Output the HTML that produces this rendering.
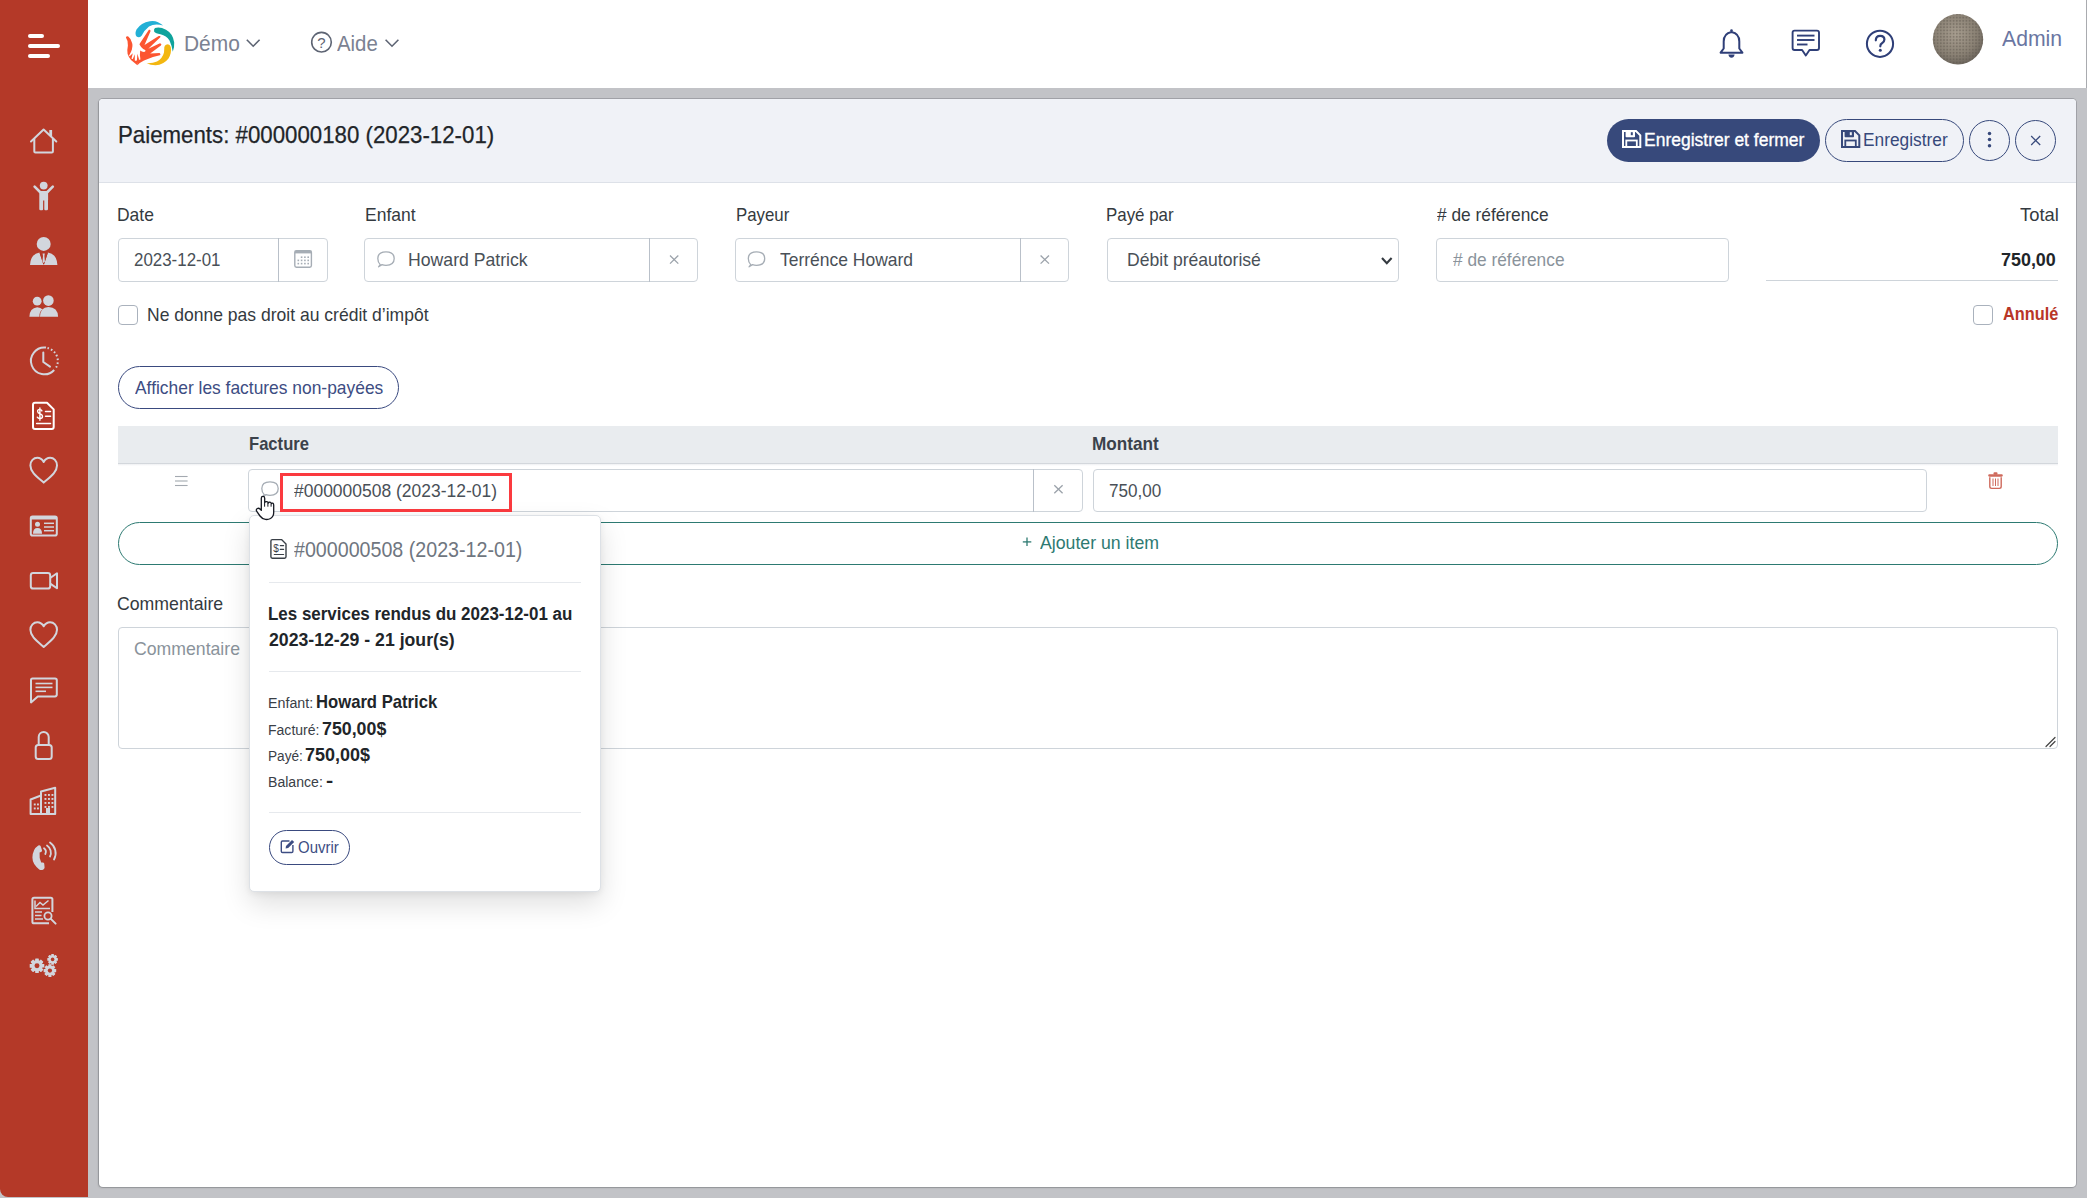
<!DOCTYPE html>
<html><head><meta charset="utf-8">
<style>
*{box-sizing:border-box;margin:0;padding:0}
html,body{width:2087px;height:1198px;overflow:hidden}
body{background:#c2c3c7;font-family:"Liberation Sans",sans-serif;position:relative}
.a{position:absolute}
.t{position:absolute;white-space:nowrap;line-height:1}
svg.a{overflow:visible}
</style></head>
<body>
<div class="a" style="left:0px;top:0px;width:88px;height:1197px;background:#b43928;border-bottom-left-radius:8px"></div>
<div class="a" style="left:88px;top:0px;width:1998px;height:88px;background:#fff"></div>
<div class="a" style="left:2086px;top:0px;width:1px;height:88px;background:#a9abaf"></div>
<div class="a" style="left:28px;top:34px;width:16px;height:4px;background:#fff;border-radius:2px"></div>
<div class="a" style="left:28px;top:44px;width:32px;height:4px;background:#fff;border-radius:2px"></div>
<div class="a" style="left:28px;top:54px;width:22px;height:4px;background:#fff;border-radius:2px"></div>
<svg class="a" style="left:0;top:0" width="2087" height="1198" viewBox="0 0 2087 1198"><g fill="none" stroke="#d2d6dd" stroke-width="2" stroke-linecap="round" stroke-linejoin="round"><polyline points="31,141.5 43.6,129.5 56.3,141.5"/><path d="M34.3,139 V151.5 Q34.3,152.6 35.4,152.6 H51.8 Q52.9,152.6 52.9,151.5 V139"/></g><rect x="49.3" y="130" width="2.8" height="6" fill="#d2d6dd"/><circle cx="43.7" cy="185.6" r="3.9" fill="#d2d6dd"/><path d="M39.3,191 H48.1 V200 H48 V209 Q48,210.2 46.8,210.2 H45.2 Q44.3,210.2 44.3,209 V200.5 H43.1 V209 Q43.1,210.2 42.1,210.2 H40.5 Q39.3,210.2 39.3,209 Z" fill="#d2d6dd"/><g stroke="#d2d6dd" stroke-width="2.6" stroke-linecap="round"><line x1="40" y1="192" x2="34.6" y2="186.6"/><line x1="47.4" y1="192" x2="52.8" y2="186.6"/></g><circle cx="43.7" cy="243.9" r="7" fill="#d2d6dd"/><path d="M30,265 Q30.5,254 39.5,252.6 L43.7,264.5 L47.9,252.6 Q57,254 57.4,265 Z" fill="#d2d6dd"/><path d="M40,252.8 L43.7,264.2 L47.4,252.8" fill="none" stroke="#b43928" stroke-width="1"/><path d="M42.6,253.6 H44.8 L44.4,256 L44.9,261.5 L43.7,263 L42.5,261.5 L43,256 Z" fill="#d2d6dd"/><circle cx="37.2" cy="301.2" r="4.4" fill="#d2d6dd"/><circle cx="48.4" cy="300.6" r="5.3" fill="#d2d6dd"/><path d="M29.4,316.7 Q29.6,308 37.2,307.2 Q41,307.3 42.5,309.6 Q39,312 39.5,316.7 Z" fill="#d2d6dd"/><path d="M40,316.7 Q40.3,307.3 48.4,307 Q57.8,307.3 58.1,316.7 Z" fill="#d2d6dd"/><path d="M46,347.6 A13.4,13.4 0 1 0 54.2,370" fill="none" stroke="#d2d6dd" stroke-width="2"/><path d="M47.5,348 A13.4,13.4 0 0 1 55.2,369" fill="none" stroke="#d2d6dd" stroke-width="2" stroke-dasharray="1.6 2.2"/><polyline points="43.3,352.5 43.3,362 50,366.6" fill="none" stroke="#d2d6dd" stroke-width="2" stroke-linecap="round" stroke-linejoin="round"/><path d="M35,402.8 H47 L53.7,409.4 V427 Q53.7,429 51.7,429 H35 Q33,429 33,427 V404.8 Q33,402.8 35,402.8 Z" fill="none" stroke="#ffffff" stroke-width="2" stroke-linejoin="round"/><g stroke="#ffffff" stroke-width="1.5" stroke-linecap="round"><line x1="45.5" y1="411.4" x2="50.5" y2="411.4"/><line x1="45.5" y1="416.2" x2="50.5" y2="416.2"/><line x1="36.6" y1="423.6" x2="50.5" y2="423.6"/></g><path d="M41.9,410.9 Q41.2,409.4 39.7,409.4 Q37.6,409.4 37.6,411.3 Q37.6,413 40,413.8 Q42.5,414.6 42.5,416.6 Q42.5,418.6 39.9,418.6 Q38.1,418.6 37.3,417.2 M39.9,407.9 V420.2" fill="none" stroke="#ffffff" stroke-width="1.4" stroke-linecap="round"/><path d="M43.7,482.59999999999997 C36.5,476.4 30.4,471.9 30.4,465.4 C30.4,460.9 33.6,457.79999999999995 37.3,457.79999999999995 C40.2,457.79999999999995 42.4,459.59999999999997 43.7,461.9 C45,459.59999999999997 47.2,457.79999999999995 50.1,457.79999999999995 C53.8,457.79999999999995 57,460.9 57,465.4 C57,471.9 50.9,476.4 43.7,482.59999999999997 Z" fill="none" stroke="#d2d6dd" stroke-width="2" stroke-linejoin="round"/><rect x="30.8" y="516.5" width="26" height="19" rx="1.8" fill="none" stroke="#d2d6dd" stroke-width="2"/><rect x="30.8" y="516.5" width="26" height="3" fill="#d2d6dd"/><circle cx="37.5" cy="524.3" r="2.5" fill="#d2d6dd"/><path d="M33,533.8 Q33,528 37.5,528 Q42,528 42,533.8 Z" fill="#d2d6dd"/><g stroke="#d2d6dd" stroke-width="1.5"><line x1="44" y1="523.3" x2="54" y2="523.3"/><line x1="44" y1="527" x2="54" y2="527"/><line x1="44" y1="530.7" x2="54" y2="530.7"/></g><rect x="30.8" y="573" width="19.4" height="15.6" rx="2.4" fill="none" stroke="#d2d6dd" stroke-width="2"/><path d="M50.2,578 L57,573.3 V588.3 L50.2,583.6" fill="none" stroke="#d2d6dd" stroke-width="2" stroke-linejoin="round"/><path d="M43.7,647.0 C36.5,640.8 30.4,636.3 30.4,629.8 C30.4,625.3 33.6,622.1999999999999 37.3,622.1999999999999 C40.2,622.1999999999999 42.4,624.0 43.7,626.3 C45,624.0 47.2,622.1999999999999 50.1,622.1999999999999 C53.8,622.1999999999999 57,625.3 57,629.8 C57,636.3 50.9,640.8 43.7,647.0 Z" fill="none" stroke="#d2d6dd" stroke-width="2" stroke-linejoin="round"/><path d="M32.5,678.5 H55 Q56.8,678.5 56.8,680.3 V694.6 Q56.8,696.4 55,696.4 H37.8 L31,702.4 V680 Q31,678.5 32.5,678.5 Z" fill="none" stroke="#d2d6dd" stroke-width="2" stroke-linejoin="round"/><g stroke="#d2d6dd" stroke-width="1.6"><line x1="35.5" y1="683.5" x2="52.5" y2="683.5"/><line x1="35.5" y1="687.4" x2="52.5" y2="687.4"/><line x1="35.5" y1="691.3" x2="46" y2="691.3"/></g><path d="M38.7,745 V737 A5,5 0 0 1 48.7,737 V745" fill="none" stroke="#d2d6dd" stroke-width="2"/><rect x="35.7" y="745" width="16" height="14" rx="2.5" fill="none" stroke="#d2d6dd" stroke-width="2"/><path d="M30.6,814 V799.5 L41,795.5 V791.5 L55.2,787.8 V814 Z M30.6,814 H55.2" fill="none" stroke="#d2d6dd" stroke-width="2" stroke-linejoin="round"/><path d="M41,795.5 V814" stroke="#d2d6dd" stroke-width="2"/><rect x="46" y="808" width="4" height="6" fill="#d2d6dd"/><g fill="#d2d6dd"><rect x="44.5" y="794" width="1.9" height="1.9"/><rect x="48" y="794" width="1.9" height="1.9"/><rect x="51.5" y="794" width="1.9" height="1.9"/><rect x="44.5" y="798" width="1.9" height="1.9"/><rect x="48" y="798" width="1.9" height="1.9"/><rect x="51.5" y="798" width="1.9" height="1.9"/><rect x="44.5" y="802" width="1.9" height="1.9"/><rect x="48" y="802" width="1.9" height="1.9"/><rect x="51.5" y="802" width="1.9" height="1.9"/><rect x="44.5" y="806" width="1.9" height="1.9"/><rect x="48" y="806" width="1.9" height="1.9"/><rect x="51.5" y="806" width="1.9" height="1.9"/><rect x="33.8" y="803.5" width="1.9" height="1.9"/><rect x="37" y="803.5" width="1.9" height="1.9"/><rect x="33.8" y="807.5" width="1.9" height="1.9"/><rect x="37" y="807.5" width="1.9" height="1.9"/></g><path d="M38.3,845.4 Q39.8,844.8 40.6,846 L42,850.2 Q42.3,851.5 41.1,852 L39.6,852.6 Q39,857.6 41.2,862.6 L42.7,862.4 Q43.9,862.4 44.2,863.6 L44.6,867.6 Q44.6,868.9 43.4,869.4 Q41.2,870.4 39.2,869.4 Q32.4,864.2 32.4,857.6 Q32.6,849 38.3,845.4 Z" fill="#d2d6dd"/><path d="M44,848.3 A4.6,4.6 0 0 1 45.3,854" fill="none" stroke="#d2d6dd" stroke-width="1.8" stroke-linecap="round"/><path d="M47,845.5 A8.6,8.6 0 0 1 50,856.5" fill="none" stroke="#d2d6dd" stroke-width="1.8" stroke-linecap="round"/><path d="M50,842.5 A13,13 0 0 1 54,859.5" fill="none" stroke="#d2d6dd" stroke-width="1.8" stroke-linecap="round"/><path d="M49,923.3 H34 Q32.4,923.3 32.4,921.7 V899.3 Q32.4,897.7 34,897.7 H50.8 Q52.4,897.7 52.4,899.3 V912" fill="none" stroke="#d2d6dd" stroke-width="2"/><g stroke="#d2d6dd" stroke-width="1.5" fill="none"><polyline points="35,900.5 35,908.5 50,908.5"/><polyline points="36,906.5 40,902.5 43,905 48.5,900.5"/><line x1="35" y1="912" x2="42" y2="912"/><line x1="35" y1="915.5" x2="41.5" y2="915.5"/><line x1="35" y1="919" x2="43" y2="919"/></g><circle cx="48" cy="916" r="3.6" fill="none" stroke="#d2d6dd" stroke-width="1.8"/><line x1="50.6" y1="918.6" x2="55.6" y2="923.6" stroke="#d2d6dd" stroke-width="2" stroke-linecap="round"/><circle cx="37.0" cy="965.8" r="5.69" fill="#d2d6dd"/><rect x="35.17" y="958.50" width="3.65" height="7.30" rx="0.5" fill="#d2d6dd" transform="rotate(0.0 37.0 965.8)"/><rect x="35.17" y="958.50" width="3.65" height="7.30" rx="0.5" fill="#d2d6dd" transform="rotate(45.0 37.0 965.8)"/><rect x="35.17" y="958.50" width="3.65" height="7.30" rx="0.5" fill="#d2d6dd" transform="rotate(90.0 37.0 965.8)"/><rect x="35.17" y="958.50" width="3.65" height="7.30" rx="0.5" fill="#d2d6dd" transform="rotate(135.0 37.0 965.8)"/><rect x="35.17" y="958.50" width="3.65" height="7.30" rx="0.5" fill="#d2d6dd" transform="rotate(180.0 37.0 965.8)"/><rect x="35.17" y="958.50" width="3.65" height="7.30" rx="0.5" fill="#d2d6dd" transform="rotate(225.0 37.0 965.8)"/><rect x="35.17" y="958.50" width="3.65" height="7.30" rx="0.5" fill="#d2d6dd" transform="rotate(270.0 37.0 965.8)"/><rect x="35.17" y="958.50" width="3.65" height="7.30" rx="0.5" fill="#d2d6dd" transform="rotate(315.0 37.0 965.8)"/><circle cx="37.0" cy="965.8" r="2.48" fill="#b43928"/><circle cx="52.6" cy="959.4" r="4.13" fill="#d2d6dd"/><rect x="51.27" y="954.10" width="2.65" height="5.30" rx="0.5" fill="#d2d6dd" transform="rotate(0.0 52.6 959.4)"/><rect x="51.27" y="954.10" width="2.65" height="5.30" rx="0.5" fill="#d2d6dd" transform="rotate(45.0 52.6 959.4)"/><rect x="51.27" y="954.10" width="2.65" height="5.30" rx="0.5" fill="#d2d6dd" transform="rotate(90.0 52.6 959.4)"/><rect x="51.27" y="954.10" width="2.65" height="5.30" rx="0.5" fill="#d2d6dd" transform="rotate(135.0 52.6 959.4)"/><rect x="51.27" y="954.10" width="2.65" height="5.30" rx="0.5" fill="#d2d6dd" transform="rotate(180.0 52.6 959.4)"/><rect x="51.27" y="954.10" width="2.65" height="5.30" rx="0.5" fill="#d2d6dd" transform="rotate(225.0 52.6 959.4)"/><rect x="51.27" y="954.10" width="2.65" height="5.30" rx="0.5" fill="#d2d6dd" transform="rotate(270.0 52.6 959.4)"/><rect x="51.27" y="954.10" width="2.65" height="5.30" rx="0.5" fill="#d2d6dd" transform="rotate(315.0 52.6 959.4)"/><circle cx="52.6" cy="959.4" r="1.80" fill="#b43928"/><circle cx="49.9" cy="970.6" r="4.91" fill="#d2d6dd"/><rect x="48.32" y="964.30" width="3.15" height="6.30" rx="0.5" fill="#d2d6dd" transform="rotate(0.0 49.9 970.6)"/><rect x="48.32" y="964.30" width="3.15" height="6.30" rx="0.5" fill="#d2d6dd" transform="rotate(45.0 49.9 970.6)"/><rect x="48.32" y="964.30" width="3.15" height="6.30" rx="0.5" fill="#d2d6dd" transform="rotate(90.0 49.9 970.6)"/><rect x="48.32" y="964.30" width="3.15" height="6.30" rx="0.5" fill="#d2d6dd" transform="rotate(135.0 49.9 970.6)"/><rect x="48.32" y="964.30" width="3.15" height="6.30" rx="0.5" fill="#d2d6dd" transform="rotate(180.0 49.9 970.6)"/><rect x="48.32" y="964.30" width="3.15" height="6.30" rx="0.5" fill="#d2d6dd" transform="rotate(225.0 49.9 970.6)"/><rect x="48.32" y="964.30" width="3.15" height="6.30" rx="0.5" fill="#d2d6dd" transform="rotate(270.0 49.9 970.6)"/><rect x="48.32" y="964.30" width="3.15" height="6.30" rx="0.5" fill="#d2d6dd" transform="rotate(315.0 49.9 970.6)"/><circle cx="49.9" cy="970.6" r="2.14" fill="#b43928"/></svg>
<svg class="a" style="left:0;top:0" width="2087" height="1198" viewBox="0 0 2087 1198"><path d="M163.2,25.6 Q157,19.8 149.8,21.2 Q141,22.5 136.5,29.5 Q134.5,34 136.6,36.5 Q139,38.5 141.6,35.7 Q144,30.5 149,26.5 Q155,22.8 163.2,25.6 Z" fill="#22b0d6"/><path d="M155,28 Q160,26.5 166,29.7 Q173,33.5 174.2,42.5 Q174.5,47.5 172.8,51.7 Q171.8,45.5 169.5,40.5 Q166.5,35.5 160.5,34.2 Q155.5,33.6 154.2,31.8 Q153.5,29 155,28 Z" fill="#0fa39c"/><path d="M166,44.8 Q169.5,43.3 170.8,47 Q171.8,53 168.5,58.5 Q163.5,65 155.5,65.2 Q150.5,65.2 146.6,63.2 Q152.5,63.5 157,61.5 Q162.5,58.5 164,52.5 Q164.3,49 164.3,47.3 Q164.6,45.3 166,44.8 Z" fill="#f3b710"/><path d="M137.4,65.3 Q140,62.5 144,60.6 Q152,56.5 159.9,55.2 Q161.4,54.3 159.6,53.1 L150.2,53.4 L160.9,45.4 Q162.2,44 160,43.2 L148.3,48.8 L160.3,37.2 Q161.2,35.5 158.7,36.1 L144.5,45 L150.5,31.2 Q150.8,29.2 148.9,29.8 L139.3,44.3 Q140.5,47 142.5,48.2 Q141.5,52 139,54 Z" fill="#fc5531"/><path d="M125.9,37.4 Q126.6,35.8 128.3,36.6 Q131.2,38.8 132.3,43.5 L139.3,44.3 L146,50.5 L146,53 L139.5,56 L137.4,65.3 L131,60 Q128.8,57.5 127.6,54 Q126.9,50 127.9,45.5 Q128.2,40.5 125.9,37.4 Z" fill="#fc5531"/><path d="M131,38 L139.3,38 L139.3,44.3 Q141,47.5 143.2,48.9 Q145,49.6 145.6,50.5 Q145.5,51.9 144,51.9 Q141.7,51.8 140.2,50.6 L139.9,55 L140.4,59.3 Q140,60.1 139.2,59.7 L137.4,53.8 L136.9,60.2 Q136,61.2 134.8,60.6 L134.8,54.3 L132.8,58.9 Q132,59.4 131.5,58.6 L132.8,53.2 L129.9,56.1 Q129.2,56.3 129.1,55.4 Q131,52.5 131.9,49.5 Q132.8,46 132.3,42.5 Q131.9,39.8 131,38 Z" fill="#fff"/><polyline points="246.8,39.8 253.2,46.2 259.6,39.8" fill="none" stroke="#5d6473" stroke-width="1.6"/><circle cx="321.5" cy="42.2" r="9.8" fill="none" stroke="#5d6473" stroke-width="1.6"/><text x="321.5" y="48.3" text-anchor="middle" font-family="Liberation Sans" font-size="15" fill="#5d6473">?</text><polyline points="385.6,39.8 392,46.2 398.4,39.8" fill="none" stroke="#5d6473" stroke-width="1.6"/><path d="M1720.6,52.7 H1742.4 L1739.3,48.5 V41.5 Q1739.3,33.5 1731.5,32 Q1723.7,33.5 1723.7,41.5 V48.5 Z" fill="none" stroke="#2f3f78" stroke-width="2" stroke-linejoin="round"/><circle cx="1731.5" cy="30.5" r="1.3" fill="#2f3f78"/><path d="M1728.4,54.5 H1734.6 Q1734,57.8 1731.5,57.8 Q1729,57.8 1728.4,54.5 Z" fill="#2f3f78"/><path d="M1794.5,30.6 H1817 Q1819,30.6 1819,32.6 V48 Q1819,50 1817,50 H1809.5 L1805.8,55.6 L1802.1,50 H1794.5 Q1792.6,50 1792.6,48 V32.6 Q1792.6,30.6 1794.5,30.6 Z" fill="none" stroke="#2f3f78" stroke-width="1.9" stroke-linejoin="round"/><g stroke="#2f3f78" stroke-width="1.9"><line x1="1797" y1="35.6" x2="1814.5" y2="35.6"/><line x1="1797" y1="40" x2="1814.5" y2="40"/><line x1="1797" y1="44.5" x2="1807.5" y2="44.5"/></g><circle cx="1880" cy="43.8" r="13.1" fill="none" stroke="#2f3f78" stroke-width="2"/><path d="M1875.8,40.3 Q1875.8,35.8 1880.2,35.8 Q1884.4,35.8 1884.4,39.6 Q1884.4,42 1882,43.3 Q1880.3,44.2 1880.3,46.3" fill="none" stroke="#2f3f78" stroke-width="2.2" stroke-linecap="round"/><circle cx="1880.3" cy="50.3" r="1.5" fill="#2f3f78"/><defs><radialGradient id="av" cx="45%" cy="40%" r="60%"><stop offset="0" stop-color="#a89e90"/><stop offset="0.7" stop-color="#8a8174"/><stop offset="1" stop-color="#6e675e"/></radialGradient><pattern id="mesh" width="3.2" height="3.2" patternUnits="userSpaceOnUse"><circle cx="1.6" cy="1.6" r="1" fill="#5b544c" opacity=".45"/></pattern></defs><circle cx="1958" cy="39.3" r="25.2" fill="url(#av)"/><circle cx="1958" cy="39.3" r="25.2" fill="url(#mesh)"/></svg>
<div class="t" style="left:183.82px;top:33px;font-size:21.6px;color:#7b8292;font-weight:normal;transform:scaleX(0.9695);transform-origin:0 0;">Démo</div>
<div class="t" style="left:337.20px;top:34px;font-size:21.5px;color:#7b8292;font-weight:normal;transform:scaleX(0.9468);transform-origin:0 0;">Aide</div>
<div class="t" style="left:2001.70px;top:29px;font-size:21.5px;color:#6a76a2;font-weight:normal;transform:scaleX(0.9856);transform-origin:0 0;">Admin</div>
<div class="a" style="left:99px;top:99px;width:1977px;height:1088px;background:#fff;border-radius:4px;box-shadow:0 0 0 1px rgba(110,113,120,.4),-1px 1px 2px rgba(0,0,0,.12)"></div>
<div class="a" style="left:99px;top:99px;width:1977px;height:83px;background:#f0f2f7;border-radius:4px 4px 0 0"></div>
<div class="a" style="left:99px;top:182px;width:1977px;height:1px;background:#dde1e8"></div>
<div class="t" style="left:118.02px;top:124px;font-size:23.4px;color:#212529;font-weight:normal;transform:scaleX(0.9516);transform-origin:0 0;-webkit-text-stroke:0.25px #212529">Paiements: #000000180 (2023-12-01)</div>
<div class="a" style="left:1607px;top:119px;width:213px;height:43px;background:#37497b;border-radius:22px"></div>
<div class="t" style="left:1643.80px;top:131px;font-size:18.9px;color:#fff;font-weight:normal;transform:scaleX(0.9258);transform-origin:0 0;-webkit-text-stroke:0.35px #fff">Enregistrer et fermer</div>
<div class="a" style="left:1825px;top:119px;width:139px;height:43px;border:1px solid #37497b;border-radius:22px"></div>
<div class="t" style="left:1862.71px;top:131px;font-size:18.9px;color:#37497b;font-weight:normal;transform:scaleX(0.9168);transform-origin:0 0;">Enregistrer</div>
<div class="a" style="left:1969px;top:120px;width:41px;height:41px;border:1px solid #37497b;border-radius:50%"></div>
<div class="a" style="left:2015px;top:120px;width:41px;height:41px;border:1px solid #37497b;border-radius:50%"></div>
<div class="t" style="left:117.20px;top:206px;font-size:18.6px;color:#343a40;font-weight:normal;transform:scaleX(0.9402);transform-origin:0 0;">Date</div>
<div class="t" style="left:364.60px;top:206px;font-size:18.6px;color:#343a40;font-weight:normal;transform:scaleX(0.9409);transform-origin:0 0;">Enfant</div>
<div class="t" style="left:735.55px;top:206px;font-size:18.6px;color:#343a40;font-weight:normal;transform:scaleX(0.9054);transform-origin:0 0;">Payeur</div>
<div class="t" style="left:1106.35px;top:206px;font-size:18.6px;color:#343a40;font-weight:normal;transform:scaleX(0.9089);transform-origin:0 0;">Payé par</div>
<div class="t" style="left:1437.20px;top:206px;font-size:18.6px;color:#343a40;font-weight:normal;transform:scaleX(0.9308);transform-origin:0 0;"># de référence</div>
<div class="t" style="left:2019.73px;top:206px;font-size:18.6px;color:#343a40;font-weight:normal;transform:scaleX(0.9879);transform-origin:0 0;">Total</div>
<div class="a" style="left:118px;top:238px;width:210px;height:44px;border:1px solid #ced4da;background:#fff;border-radius:4px"></div>
<div class="a" style="left:278px;top:238px;width:1px;height:44px;background:#b9c0c9"></div>
<div class="t" style="left:133.55px;top:251px;font-size:18.6px;color:#495057;font-weight:normal;transform:scaleX(0.9093);transform-origin:0 0;">2023-12-01</div>
<div class="a" style="left:364px;top:238px;width:334px;height:44px;border:1px solid #ced4da;background:#fff;border-radius:4px"></div>
<div class="a" style="left:649px;top:238px;width:1px;height:44px;background:#b9c0c9"></div>
<div class="t" style="left:407.79px;top:251px;font-size:18.6px;color:#495057;font-weight:normal;transform:scaleX(0.9493);transform-origin:0 0;">Howard Patrick</div>
<div class="a" style="left:735px;top:238px;width:334px;height:44px;border:1px solid #ced4da;background:#fff;border-radius:4px"></div>
<div class="a" style="left:1020px;top:238px;width:1px;height:44px;background:#b9c0c9"></div>
<div class="t" style="left:779.65px;top:251px;font-size:18.6px;color:#495057;font-weight:normal;transform:scaleX(0.9396);transform-origin:0 0;">Terrénce Howard</div>
<div class="a" style="left:1107px;top:238px;width:292px;height:44px;border:1px solid #ced4da;background:#fff;border-radius:4px"></div>
<div class="t" style="left:1127.09px;top:251px;font-size:18.6px;color:#495057;font-weight:normal;transform:scaleX(0.9453);transform-origin:0 0;">Débit préautorisé</div>
<div class="a" style="left:1436px;top:238px;width:293px;height:44px;border:1px solid #ced4da;background:#fff;border-radius:4px"></div>
<div class="t" style="left:1453.30px;top:251px;font-size:18.6px;color:#8a939b;font-weight:normal;transform:scaleX(0.9299);transform-origin:0 0;"># de référence</div>
<div class="t" style="left:2001.28px;top:251px;font-size:18.2px;color:#212529;font-weight:bold;transform:scaleX(0.9846);transform-origin:0 0;">750,00</div>
<div class="a" style="left:1766px;top:280px;width:292px;height:1px;background:#ced4da"></div>
<div class="a" style="left:118px;top:305px;width:20px;height:20px;border:1px solid #aab2bd;border-radius:4px;background:#fff"></div>
<div class="t" style="left:147.40px;top:306px;font-size:18.6px;color:#343a40;font-weight:normal;transform:scaleX(0.9424);transform-origin:0 0;">Ne donne pas droit au crédit d’impôt</div>
<div class="a" style="left:1973px;top:305px;width:20px;height:20px;border:1px solid #aab2bd;border-radius:4px;background:#fff"></div>
<div class="t" style="left:2003.31px;top:306px;font-size:17.9px;color:#b83627;font-weight:bold;transform:scaleX(0.9120);transform-origin:0 0;">Annulé</div>
<div class="a" style="left:118px;top:366px;width:281px;height:43px;border:1px solid #3a4a7f;border-radius:22px"></div>
<div class="t" style="left:134.70px;top:379px;font-size:18.6px;color:#3d4d83;font-weight:normal;transform:scaleX(0.9359);transform-origin:0 0;">Afficher les factures non-payées</div>
<div class="a" style="left:118px;top:426px;width:1940px;height:37px;background:#e9ecef"></div>
<div class="a" style="left:118px;top:463px;width:1940px;height:1px;background:#d3d7dc"></div>
<div class="a" style="left:118px;top:464px;width:1940px;height:2px;background:linear-gradient(#eef0f2,#fff)"></div>
<div class="t" style="left:248.94px;top:436px;font-size:17.9px;color:#3b424b;font-weight:bold;transform:scaleX(0.9279);transform-origin:0 0;">Facture</div>
<div class="t" style="left:1092.30px;top:436px;font-size:17.9px;color:#3b424b;font-weight:bold;transform:scaleX(0.9590);transform-origin:0 0;">Montant</div>
<svg class="a" style="left:0;top:0" width="2087" height="1198"><g stroke="#a3a9b0" stroke-width="1.1"><line x1="175" y1="476.5" x2="187.6" y2="476.5"/><line x1="175" y1="481" x2="187.6" y2="481"/><line x1="175" y1="485.5" x2="187.6" y2="485.5"/></g></svg>
<div class="a" style="left:248px;top:469px;width:835px;height:43px;border:1px solid #ced4da;background:#fff;border-radius:4px"></div>
<div class="a" style="left:1033px;top:469px;width:1px;height:43px;background:#b9c0c9"></div>
<div class="a" style="left:280px;top:473px;width:232px;height:39px;border:3px solid #fb3a3f"></div>
<div class="t" style="left:294.00px;top:482px;font-size:18.6px;color:#495057;font-weight:normal;transform:scaleX(0.9395);transform-origin:0 0;">#000000508 (2023-12-01)</div>
<div class="a" style="left:1093px;top:469px;width:834px;height:43px;border:1px solid #ced4da;background:#fff;border-radius:4px"></div>
<div class="t" style="left:1109.34px;top:482px;font-size:18.6px;color:#495057;font-weight:normal;transform:scaleX(0.9196);transform-origin:0 0;">750,00</div>
<div class="a" style="left:118px;top:522px;width:1940px;height:43px;border:1px solid #2d7a72;border-radius:22px"></div>
<div class="t" style="left:1040.00px;top:534px;font-size:18.6px;color:#2e7a72;font-weight:normal;transform:scaleX(0.9518);transform-origin:0 0;">Ajouter un item</div>
<div class="t" style="left:117.42px;top:595px;font-size:18.6px;color:#343a40;font-weight:normal;transform:scaleX(0.9515);transform-origin:0 0;">Commentaire</div>
<div class="a" style="left:118px;top:627px;width:1940px;height:122px;border:1px solid #ced4da;background:#fff;border-radius:4px"></div>
<div class="t" style="left:133.72px;top:640px;font-size:18.6px;color:#8a939b;font-weight:normal;transform:scaleX(0.9497);transform-origin:0 0;">Commentaire</div>
<div class="a" style="left:249px;top:515px;width:352px;height:377px;background:#fff;border:1px solid #dde1e6;border-radius:5px;box-shadow:0 12px 28px rgba(0,0,0,.13),0 2px 6px rgba(0,0,0,.06)"></div>
<div class="t" style="left:294.30px;top:540px;font-size:21.5px;color:#6f7680;font-weight:normal;transform:scaleX(0.9141);transform-origin:0 0;">#000000508 (2023-12-01)</div>
<div class="a" style="left:269px;top:582px;width:312px;height:1px;background:#e6e9ed"></div>
<div class="t" style="left:268.01px;top:605px;font-size:18.75px;color:#212529;font-weight:bold;transform:scaleX(0.9039);transform-origin:0 0;">Les services rendus du 2023-12-01 au</div>
<div class="t" style="left:268.67px;top:631px;font-size:18.75px;color:#212529;font-weight:bold;transform:scaleX(0.9424);transform-origin:0 0;">2023-12-29 - 21 jour(s)</div>
<div class="a" style="left:269px;top:671px;width:312px;height:1px;background:#e6e9ed"></div>
<div class="t" style="left:268.06px;top:696px;font-size:14.0px;color:#3a4047;font-weight:normal;transform:scaleX(1.0190);transform-origin:0 0;">Enfant:</div>
<div class="t" style="left:315.63px;top:692px;font-size:19.0px;color:#212529;font-weight:bold;transform:scaleX(0.8760);transform-origin:0 0;">Howard Patrick</div>
<div class="t" style="left:268.08px;top:723px;font-size:14.0px;color:#3a4047;font-weight:normal;transform:scaleX(1.0020);transform-origin:0 0;">Facturé:</div>
<div class="t" style="left:322.29px;top:720px;font-size:18.5px;color:#212529;font-weight:bold;transform:scaleX(0.9611);transform-origin:0 0;">750,00$</div>
<div class="t" style="left:268.11px;top:749px;font-size:14.0px;color:#3a4047;font-weight:normal;transform:scaleX(0.9743);transform-origin:0 0;">Payé:</div>
<div class="t" style="left:305.48px;top:746px;font-size:18.5px;color:#212529;font-weight:bold;transform:scaleX(0.9718);transform-origin:0 0;">750,00$</div>
<div class="t" style="left:268.07px;top:775px;font-size:14.0px;color:#3a4047;font-weight:normal;transform:scaleX(1.0061);transform-origin:0 0;">Balance:</div>
<div class="t" style="left:325.54px;top:772px;font-size:18.5px;color:#212529;font-weight:bold;transform:scaleX(1.1676);transform-origin:0 0;">-</div>
<div class="a" style="left:269px;top:812px;width:312px;height:1px;background:#e6e9ed"></div>
<div class="a" style="left:269px;top:830px;width:81px;height:35px;border:1px solid #3a4a7f;border-radius:18px"></div>
<div class="t" style="left:298.25px;top:840px;font-size:15.8px;color:#3d4d83;font-weight:normal;transform:scaleX(0.9470);transform-origin:0 0;">Ouvrir</div>
<svg class="a" style="left:0;top:0" width="2087" height="1198" viewBox="0 0 2087 1198"><path d="M1623,131 H1636 L1640.3,135.3 V147 H1623 Z" fill="none" stroke="#fff" stroke-width="2" stroke-linejoin="miter"/><rect x="1625.6" y="131" width="9.4" height="6.2" rx="0.8" fill="#fff"/><rect x="1630.8" y="132.2" width="2" height="3" fill="#37497b"/><rect x="1626.3" y="140.5" width="10.5" height="6.5" fill="none" stroke="#fff" stroke-width="1.8"/><path d="M1842,131 H1855 L1859.3,135.3 V147 H1842 Z" fill="none" stroke="#37497b" stroke-width="2" stroke-linejoin="miter"/><rect x="1844.6" y="131" width="9.4" height="6.2" rx="0.8" fill="#37497b"/><rect x="1849.8" y="132.2" width="2" height="3" fill="#f0f2f7"/><rect x="1845.3" y="140.5" width="10.5" height="6.5" fill="none" stroke="#37497b" stroke-width="1.8"/><circle cx="1989.5" cy="133.5" r="1.75" fill="#37497b"/><circle cx="1989.5" cy="139.4" r="1.75" fill="#37497b"/><circle cx="1989.5" cy="145.8" r="1.75" fill="#37497b"/><g stroke="#37497b" stroke-width="1.3"><line x1="2031.2" y1="136" x2="2040.2" y2="145"/><line x1="2040.2" y1="136" x2="2031.2" y2="145"/></g><rect x="294.8" y="250.8" width="16.6" height="16.4" rx="1.6" fill="none" stroke="#a6adb5" stroke-width="1.4"/><rect x="294.8" y="250.8" width="16.6" height="2.6" fill="#a6adb5"/><g fill="#a6adb5"><rect x="300.8" y="256.4" width="1.6" height="1.6"/><rect x="304.1" y="256.4" width="1.6" height="1.6"/><rect x="307.4" y="256.4" width="1.6" height="1.6"/><rect x="297.5" y="259.6" width="1.6" height="1.6"/><rect x="300.8" y="259.6" width="1.6" height="1.6"/><rect x="304.1" y="259.6" width="1.6" height="1.6"/><rect x="307.4" y="259.6" width="1.6" height="1.6"/><rect x="297.5" y="262.8" width="1.6" height="1.6"/><rect x="300.8" y="262.8" width="1.6" height="1.6"/><rect x="304.1" y="262.8" width="1.6" height="1.6"/><rect x="307.4" y="262.8" width="1.6" height="1.6"/></g><path d="M380.2,264.6 Q377.8,262.3 377.8,258.6 Q377.8,251.8 386,251.8 Q394.2,251.8 394.2,258.6 Q394.2,265.3 386,265.3 Q383.8,265.3 382,264.6 L378.6,266.8 Z" fill="none" stroke="#a6adb5" stroke-width="1.3" stroke-linejoin="round"/><path d="M750.7,264.6 Q748.3,262.3 748.3,258.6 Q748.3,251.8 756.5,251.8 Q764.7,251.8 764.7,258.6 Q764.7,265.3 756.5,265.3 Q754.3,265.3 752.5,264.6 L749.1,266.8 Z" fill="none" stroke="#a6adb5" stroke-width="1.3" stroke-linejoin="round"/><path d="M264.2,494.6 Q261.8,492.3 261.8,488.6 Q261.8,481.8 270,481.8 Q278.2,481.8 278.2,488.6 Q278.2,495.3 270,495.3 Q267.8,495.3 266,494.6 L262.6,496.8 Z" fill="none" stroke="#a6adb5" stroke-width="1.3" stroke-linejoin="round"/><g stroke="#9ba2aa" stroke-width="1.3"><line x1="670" y1="255.5" x2="678.3" y2="263.6"/><line x1="678.3" y1="255.5" x2="670" y2="263.6"/></g><g stroke="#9ba2aa" stroke-width="1.3"><line x1="1040.6" y1="255.5" x2="1049" y2="263.6"/><line x1="1049" y1="255.5" x2="1040.6" y2="263.6"/></g><g stroke="#9ba2aa" stroke-width="1.3"><line x1="1054.3" y1="485.2" x2="1062.6" y2="493.2"/><line x1="1062.6" y1="485.2" x2="1054.3" y2="493.2"/></g><polyline points="1382,258 1386.8,263.2 1391.6,258" fill="none" stroke="#343a40" stroke-width="2.1"/><rect x="1988.2" y="474.2" width="14.6" height="2.5" rx="1.1" fill="#cf6a5c"/><rect x="1993.5" y="472.2" width="4" height="2.5" rx="1" fill="#cf6a5c"/><path d="M1989.8,477.2 V486.6 Q1989.8,488.4 1991.6,488.4 H1999.4 Q2001.2,488.4 2001.2,486.6 V477.2" fill="none" stroke="#cf6a5c" stroke-width="1.4"/><g stroke="#cf6a5c" stroke-width="1"><line x1="1993" y1="478.5" x2="1993" y2="486"/><line x1="1995.5" y1="478.5" x2="1995.5" y2="486"/><line x1="1998" y1="478.5" x2="1998" y2="486"/></g><g stroke="#2e7a72" stroke-width="1.3"><line x1="1022.8" y1="541.9" x2="1031.3" y2="541.9"/><line x1="1027" y1="537.6" x2="1027" y2="546.1"/></g><g stroke="#444" stroke-width="1.2" stroke-linecap="round"><line x1="2046" y1="746.5" x2="2055" y2="737.5"/><line x1="2050" y1="746.5" x2="2055" y2="741.5"/></g><path d="M272.3,539.6 H281.5 L286,544.1 V556.8 Q286,558.2 284.6,558.2 H272.3 Q270.9,558.2 270.9,556.8 V541 Q270.9,539.6 272.3,539.6 Z" fill="none" stroke="#3a4047" stroke-width="1.4" stroke-linejoin="round"/><g stroke="#3a4047" stroke-width="1.2" stroke-linecap="round"><line x1="280.3" y1="545.6" x2="283.6" y2="545.6"/><line x1="280.3" y1="549.4" x2="283.6" y2="549.4"/><line x1="274.3" y1="554.5" x2="283.6" y2="554.5"/></g><text x="273.2" y="551.6" font-family="Liberation Sans" font-size="10" fill="#3a4047">$</text><path d="M289.5,841 H282.5 Q281.3,841 281.3,842.2 V851.3 Q281.3,852.5 282.5,852.5 H291.7 Q292.9,852.5 292.9,851.3 V845" fill="none" stroke="#3d4d83" stroke-width="1.4"/><path d="M285.6,848.5 L286,845.9 L292,839.9 L294.2,842.1 L288.2,848.1 Z" fill="#3d4d83"/><path d="M261.3,510.4 V498.2 Q261.3,496.4 263,496.4 Q264.7,496.4 264.7,498.2 V502.5 Q265.2,501.5 266.6,501.6 Q268,501.7 268.3,503 Q268.8,502 270,502.1 Q271.2,502.3 271.4,503.6 Q272,503 272.8,503.2 Q273.7,503.6 273.7,505 V512.5 Q273.7,516.5 270.5,518.5 Q268,519.8 265.5,519.4 Q262,518.8 260,516 L256.6,511.2 Q255.8,509.6 257.3,508.5 Q258.8,507.8 260,509 Z" fill="#fff" stroke="#151821" stroke-width="1.3" stroke-linejoin="round"/><g stroke="#151821" stroke-width="1"><line x1="264.6" y1="502.5" x2="264.6" y2="506.7"/><line x1="267.9" y1="503" x2="267.9" y2="506.7"/><line x1="271.1" y1="503.6" x2="271.1" y2="506.7"/></g></svg>
<div class="t" style="left:729.57px;top:1196px;font-size:13.0px;color:#3a3a3a;font-weight:bold;transform:scaleX(0.8207);transform-origin:0 0;">Copyright © 2023 Tous droits réservés - Version 4.12.3 build 2023</div>
</body></html>
